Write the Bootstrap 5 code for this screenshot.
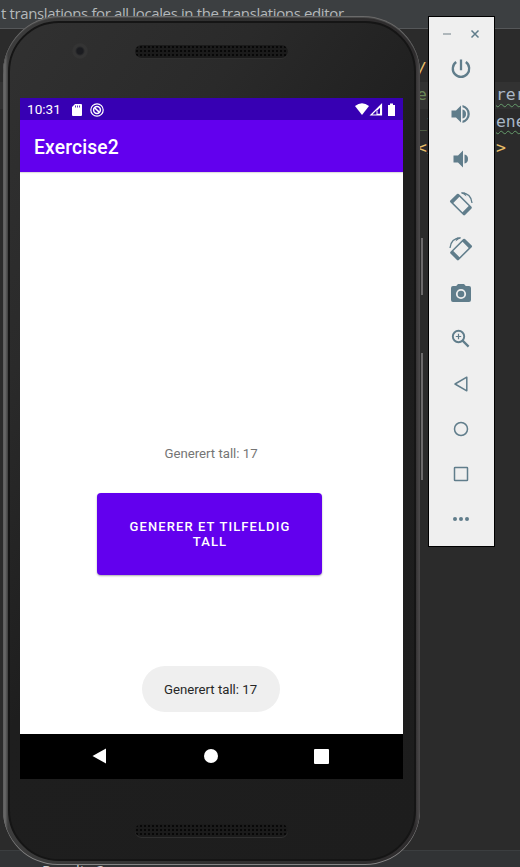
<!DOCTYPE html>
<html lang="no">
<head>
<meta charset="utf-8">
<meta name="viewport" content="width=device-width, initial-scale=1">
<title>Exercise2</title>
<link href="https://cdn.jsdelivr.net/npm/bootstrap@5.3.0/dist/css/bootstrap.min.css" rel="stylesheet">
<style>
body{width:520px;height:867px;background:#2b2b2b;font-family:Roboto,sans-serif}
.desk{width:520px;height:867px}
.banner{height:29px;background:#3c3f41;border-bottom:1px solid #555759;color:#b4b8ba;font:15px/20px "Open Sans",sans-serif;padding:3px 0 0 1px;letter-spacing:-.37px;white-space:nowrap}
.code{padding-left:417px;font:16.4px/26px "DejaVu Sans Mono",monospace;color:#a9b7c6;white-space:pre;padding-top:27px}
.code>div{height:26.4px}
.code .hl{background:#323232;margin-left:-417px;padding-left:417px}
.tag{color:#e8bf6a}.str{color:#6a8759}
.wavy{text-decoration:underline wavy #659c6b 1px;text-underline-offset:3px}
.status-strip{height:17px;background:#313335;border-top:1px solid #3b3e40;color:#ccc;font:15px/20px "Open Sans",sans-serif;padding:9px 0 0 42px;white-space:pre}
.phone{left:3px;top:16px;width:417px;height:849px;border-radius:57px 57px 55px 55px;background:linear-gradient(90deg,#5c5c5c 0,#6a6a6a 2px,#3c3c3c 5px,#303030 50%,#2e2c2d 98.8%,#413f40 99.5%,#4c4a4b 100%);box-shadow:inset 0 1px 0 #6a6a6a,inset 0 -1px 0 #858585,inset 0 2px 0 #484848}
.face{margin:5px 5px 4px 5px;height:840px;width:408px;border-radius:51px;background:linear-gradient(125deg,#313131 0,#2a2a2a 25%,#1e1e1e 50%,#1d1d1d 100%);border:2px solid #151515}
.upper{height:75px}
.lens{width:16px;height:16px;margin:20px 0 0 62px;border-radius:50%;background:radial-gradient(circle at 50% 50%,#1b1c20 0 3px,#343434 5px 7px,#303030 8px)}
.grille{width:153px;height:13px;border-radius:7px;background:#1b1b1b radial-gradient(circle,#080808 1px,transparent 1.3px) 0 0/4px 4px;box-shadow:0 1px 0 #303030}
.upper .grille{margin:22px 0 0 47px}
.screen{width:383px;height:681px;margin-left:10px;background:#fff}
.sys{height:22px;background:#3700b3;color:#fff;font-size:13.6px;padding:1px 7px 0 7px}
.appbar{height:52px;background:#6200ee;color:#fff;font-size:19.3px;font-weight:500;letter-spacing:.14px;padding:4px 0 0 14px;box-shadow:0 1px 1px #0002}
.content{height:562px}
.result{margin-top:273px;margin-right:1px;font-size:13.2px;line-height:18px;color:#757575}
.go{width:225px;height:82px;margin-top:30px;margin-right:4px;border-radius:4px;background:#6200ee;color:#fff;font-size:13px;font-weight:500;line-height:15.4px;letter-spacing:1.1px;box-shadow:0 1px 2px #0005;border:0;padding:0 19px 0 20px}
.bubble{width:138px;height:46px;margin-top:91px;margin-right:2px;border-radius:23px;background:#efefef;color:#272727;font-size:13.2px;padding-top:2px}
.navkeys{height:45px;background:#000;padding:0 74px 1px 71px}
.edge-key{width:2px;background:#6d6b6c;left:421px}
.tools{left:428px;top:16px;width:67px;height:531px;background:#efefef;border:1px solid #000;color:#607d8b}
.winbtns{height:29px;padding:9px 13px 0 13px}
.tool{height:45px;width:65px;padding-right:1px}
svg{display:block;flex:none}
</style>
<script src="https://cdn.jsdelivr.net/npm/bootstrap@5.3.0/dist/js/bootstrap.bundle.min.js"></script>
</head>
<body class="overflow-hidden">
<div class="desk position-relative overflow-hidden d-flex flex-column">
  <div class="banner overflow-hidden">t translations for all locales in the translations editor</div>
  <div class="code flex-grow-1 overflow-hidden"><div><span class="tag">/s</span></div><div class="hl"><span class="str">e</span>       <span class="wavy">rer</span></div><div><span class="str">_t</span>      <span class="wavy">ene</span></div><div><span class="tag">&lt;/      &gt;</span></div></div>
  <div class="status-strip overflow-hidden">Results 2  :   group</div>

  <div class="edge-key position-absolute" style="top:238px;height:57px"></div>
  <div class="edge-key position-absolute" style="top:353px;height:127px"></div>

  <section class="phone position-absolute overflow-hidden">
    <div class="face">
      <div class="upper d-flex"><div class="lens"></div><div class="grille"></div></div>
      <div class="screen d-flex flex-column">
        <div class="sys d-flex align-items-center">
          <span>10:31</span>
          <svg style="margin-left:11px" width="10" height="12" viewBox="0 0 10 12"><path d="M3 0h6q1 0 1 1v10q0 1-1 1H1q-1 0-1-1V3z" fill="#fff"/><path d="M3.500 1.500v2M5.500 1.500v2M7.500 1.500v2" stroke="#3700b3" stroke-width=".8"/></svg>
          <svg style="margin-left:8px" width="14" height="14" viewBox="0 0 14 14" fill="none" stroke="#fff"><circle cx="7" cy="7" r="6.200" stroke-width="1.200"/><circle cx="7" cy="7" r="3.400" stroke-width="1.500"/><path d="M4.600 4.700l4.800 4.700" stroke-width="1.500"/></svg>
          <svg class="ms-auto" width="41" height="13" viewBox="0 0 41 13"><path d="M0 3Q7-2.500 14 3L7 12z" fill="#fff"/><path d="M16 12L26.500 1.500V12z" fill="none" stroke="#fff" stroke-width="1.200"/><path d="M21.500 6.500L27 1v11h-5.500z" fill="#fff"/><path d="M22.500 7.300l2.500-2.500v6h-2.500z" fill="#3700b3"/><path d="M33 2h2V.5h3V2h2v11h-7z" fill="#fff"/></svg>
        </div>
        <div class="appbar d-flex align-items-center">Exercise2</div>
        <div class="content d-flex flex-column align-items-center">
          <div class="result">Generert tall: 17</div>
          <button class="go text-center" type="button">GENERER ET TILFELDIG<br>TALL</button>
          <div class="bubble d-flex align-items-center justify-content-center">Generert tall: 17</div>
        </div>
        <div class="navkeys d-flex align-items-center justify-content-between">
          <svg width="16" height="16" viewBox="0 0 16 16" fill="#fff"><path d="M1.500 8L15 .5v15z"/></svg>
          <svg width="14" height="14" viewBox="0 0 14 14" fill="#fff"><circle cx="7" cy="7" r="7"/></svg>
          <svg width="15" height="15" viewBox="0 0 15 15" fill="#fff"><rect width="15" height="15" rx="1"/></svg>
        </div>
      </div>
      <div class="d-flex justify-content-center pt-5"><div class="grille" style="margin-top:-3px;margin-right:1px"></div></div>
    </div>
  </section>

  <aside class="tools position-absolute">
    <div class="winbtns d-flex justify-content-between">
      <svg width="10" height="16" viewBox="0 0 10 16"><path d="M1 8h8" stroke="#9aa5aa" stroke-width="1.500"/></svg>
      <svg width="12" height="16" viewBox="0 0 12 16"><path d="M2.500 4.500l7 7M9.500 4.500l-7 7" stroke="#607d8b" stroke-width="1.500"/></svg>
    </div>
    <div class="tool d-flex align-items-center justify-content-center"><svg width="24" height="24" viewBox="0 0 24 24" fill="none" stroke="currentColor" stroke-width="2.300"><path d="M12 2.600v10.600M7.200 5A8.200 8.200 0 1 0 16.800 5"/></svg></div>
    <div class="tool d-flex align-items-center justify-content-center"><svg width="24" height="24" viewBox="0 0 24 24" fill="currentColor"><path d="M2.500 8.500v7h4.500l5 5V3.500l-5 5zM17 12A4.500 4.500 0 0 0 13.500 7.500v9A4.500 4.500 0 0 0 17 12zM13.500 3v2.300a7 7 0 0 1 0 13.400V21a9.200 9.200 0 0 0 0-18z"/></svg></div>
    <div class="tool d-flex align-items-center justify-content-center"><svg width="24" height="24" viewBox="0 0 24 24" fill="currentColor"><path d="M4.500 8.500v7H9l5 5V3.500l-5 5zM19 12a4.500 4.500 0 0 0-3.500-4.500v9A4.500 4.500 0 0 0 19 12z"/></svg></div>
    <div class="tool d-flex align-items-center justify-content-center"><svg width="24" height="24" viewBox="0 0 24 24"><path fill="currentColor" fill-rule="evenodd" d="M8 2.100q.9-.8 1.800 0L22.500 14.800q.8.900 0 1.700L16 23q-.9.800-1.800 0L1.300 10.200q-.8-.9 0-1.700zM10.400 4.700L4.300 10.900 13.500 20.200l6.200-6.200z"/><path d="M12.500 1Q22 1 23 11" fill="none" stroke="currentColor" stroke-width="1.300"/><path d="M12 .5h4l1.500 4z" fill="currentColor"/></svg></div>
    <div class="tool d-flex align-items-center justify-content-center"><svg width="24" height="24" viewBox="0 0 24 24"><g transform="matrix(-1 0 0 1 24 0)"><path fill="currentColor" fill-rule="evenodd" d="M8 2.100q.9-.8 1.800 0L22.500 14.800q.8.900 0 1.700L16 23q-.9.800-1.800 0L1.300 10.200q-.8-.9 0-1.700zM10.400 4.700L4.300 10.900 13.500 20.200l6.200-6.200z"/><path d="M12.500 1Q22 1 23 11" fill="none" stroke="currentColor" stroke-width="1.300"/><path d="M12 .5h4l1.500 4z" fill="currentColor"/></g></svg></div>
    <div class="tool d-flex align-items-center justify-content-center"><svg width="24" height="24" viewBox="0 0 24 24"><path fill="currentColor" d="M9 2L7.200 4H4a2 2 0 0 0-2 2v12a2 2 0 0 0 2 2h16a2 2 0 0 0 2-2V6a2 2 0 0 0-2-2h-3.200L15 2z"/><circle cx="12" cy="12" r="4.200" fill="none" stroke="#efefef" stroke-width="1.800"/></svg></div>
    <div class="tool d-flex align-items-center justify-content-center"><svg width="24" height="24" viewBox="0 0 24 24" fill="none" stroke="currentColor" stroke-width="1.900"><circle cx="9.500" cy="9.500" r="5.700"/><path d="M13.600 13.600l6 6" stroke-width="2.200"/><path d="M9.500 6.800v5.400M6.800 9.500h5.400" stroke-width="1.200"/></svg></div>
    <div class="tool d-flex align-items-center justify-content-center"><svg width="24" height="24" viewBox="0 0 24 24" fill="none" stroke="currentColor" stroke-width="1.500" stroke-linejoin="round"><path d="M6 12L17.800 5.200v13.600z"/></svg></div>
    <div class="tool d-flex align-items-center justify-content-center"><svg width="24" height="24" viewBox="0 0 24 24" fill="none" stroke="currentColor" stroke-width="1.500"><circle cx="12" cy="12" r="6.500"/></svg></div>
    <div class="tool d-flex align-items-center justify-content-center"><svg width="24" height="24" viewBox="0 0 24 24" fill="none" stroke="currentColor" stroke-width="1.500"><rect x="5.500" y="5.500" width="13" height="13" rx=".6"/></svg></div>
    <div class="tool d-flex align-items-center justify-content-center"><svg width="24" height="24" viewBox="0 0 24 24" fill="currentColor"><circle cx="6" cy="12" r="2"/><circle cx="12" cy="12" r="2"/><circle cx="18" cy="12" r="2"/></svg></div>
  </aside>
</div>
</body>
</html>
